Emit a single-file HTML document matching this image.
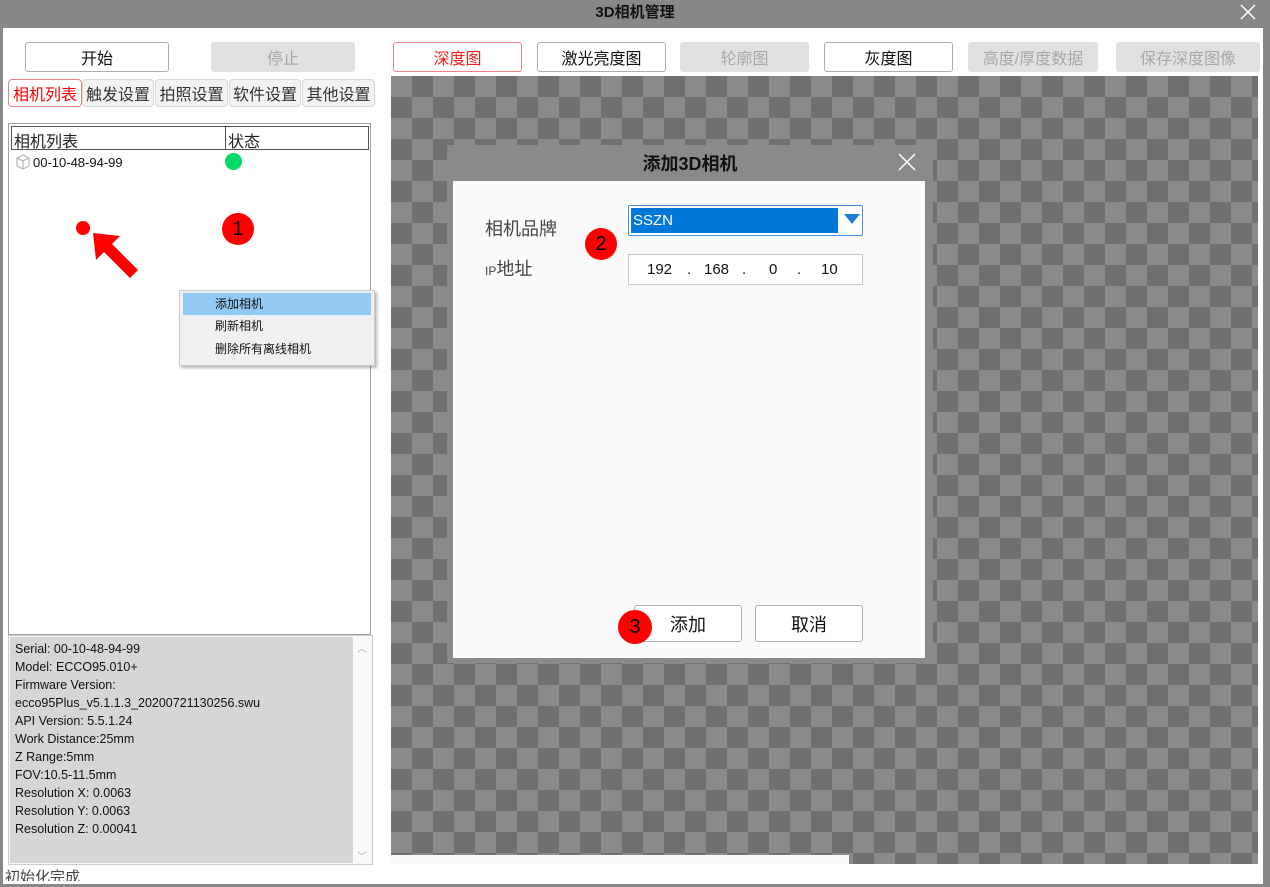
<!DOCTYPE html>
<html><head><meta charset="utf-8"><style>
*{box-sizing:border-box;margin:0;padding:0}
body{width:1270px;height:887px;overflow:hidden;background:#888;font-family:"Liberation Sans","Noto Sans CJK SC",sans-serif;position:relative}
.abs{position:absolute}
.btn{position:absolute;height:30px;border:1px solid #adadad;border-radius:3px;background:#fff;font-size:16px;display:flex;align-items:center;justify-content:center;color:#111}
.dis{background:#e1e1e1;border-color:#e1e1e1;color:#a8a8a8}
.red{border-color:#f08080;color:#f02020}
.tab{position:absolute;top:79px;height:28px;border:1px solid #d8d8d8;border-radius:4px;background:#f2f2f2;font-size:16px;display:flex;align-items:center;justify-content:center;color:#333}
.badge{position:absolute;width:32px;height:32px;border-radius:50%;background:#f00;color:#000;font-size:20px;display:flex;align-items:center;justify-content:center}
.info div{height:18px;line-height:18px}
</style></head><body>
<div class="abs" style="left:0;top:0;width:1270px;height:28px;background:#888;text-align:center;font-weight:bold;font-size:15px;line-height:26px;color:#111">3D相机管理</div>
<svg class="abs" style="left:1240px;top:4px" width="16" height="16"><path d="M1 1L15 15M15 1L1 15" stroke="#fff" stroke-width="1.5"/></svg>
<div class="abs" style="left:3px;top:28px;width:1260px;height:859px;background:#fff"></div>
<div class="abs" style="left:0;top:884px;width:1270px;height:3px;background:#888"></div>

<div class="btn" style="left:25px;top:42px;width:144px">开始</div>
<div class="btn dis" style="left:211px;top:42px;width:144px">停止</div>
<div class="btn red" style="left:393px;top:42px;width:129px">深度图</div>
<div class="btn" style="left:537px;top:42px;width:129px">激光亮度图</div>
<div class="btn dis" style="left:680px;top:42px;width:129px">轮廓图</div>
<div class="btn" style="left:824px;top:42px;width:129px">灰度图</div>
<div class="btn dis" style="left:968px;top:42px;width:130px">高度/厚度数据</div>
<div class="btn dis" style="left:1116px;top:42px;width:144px">保存深度图像</div>

<div class="tab" style="left:8px;width:74px;border-color:#f08080;color:#f00;background:#fff">相机列表</div>
<div class="tab" style="left:82px;width:72px">触发设置</div>
<div class="tab" style="left:155px;width:73px">拍照设置</div>
<div class="tab" style="left:229px;width:72px">软件设置</div>
<div class="tab" style="left:302px;width:73px">其他设置</div>

<div class="abs" style="left:8px;top:123px;width:363px;height:512px;border:1px solid #a0a0a0;background:#fff"></div>
<div class="abs" style="left:11px;top:126px;width:358px;height:24px;border:1px solid #555;font-size:16px;color:#222">
 <span class="abs" style="left:2px;top:1px">相机列表</span>
 <div class="abs" style="left:213px;top:0;width:1px;height:22px;background:#555"></div>
 <span class="abs" style="left:216px;top:1px">状态</span>
</div>
<svg class="abs" style="left:15px;top:154px" width="16" height="16"><path d="M8 1L14 4V12L8 15L2 12V4Z M2 4L8 7L14 4 M8 7V15" fill="none" stroke="#aaa"/></svg>
<div class="abs" style="left:33px;top:155px;font-size:13px;color:#111">00-10-48-94-99</div>
<div class="abs" style="left:225px;top:153px;width:17px;height:17px;border-radius:50%;background:#00dc64"></div>

<div class="abs" style="left:76px;top:221px;width:14px;height:14px;border-radius:50%;background:#f00"></div>
<svg class="abs" style="left:90px;top:230px" width="50" height="50"><path d="M3 3L30 6L22 14L48 40L40 48L14 22L6 30Z" fill="#f00"/></svg>
<div class="badge" style="left:222px;top:213px">1</div>

<div class="abs" style="left:179px;top:290px;width:196px;height:76px;background:#f0f0f0;border:1px solid #ccc;box-shadow:2px 2px 3px rgba(0,0,0,.3);font-size:12px;color:#111">
 <div style="margin:2px 3px 0;height:22px;background:#93c9f5;padding-left:32px;line-height:22px">添加相机</div>
 <div style="padding-left:35px;line-height:23px">刷新相机</div>
 <div style="padding-left:35px;line-height:22px">删除所有离线相机</div>
</div>

<div class="abs" style="left:8px;top:635px;width:365px;height:230px;background:#f8f8f8;border:1px solid #ccc"></div>
<div class="abs info" style="left:10px;top:637px;width:343px;height:226px;background:#d6d6d6;padding:3px 0 0 5px;font-size:12.5px;color:#111">
<div>Serial: 00-10-48-94-99</div><div>Model: ECCO95.010+</div><div>Firmware Version:</div><div>ecco95Plus_v5.1.1.3_20200721130256.swu</div><div>API Version: 5.5.1.24</div><div>Work Distance:25mm</div><div>Z Range:5mm</div><div>FOV:10.5-11.5mm</div><div>Resolution X: 0.0063</div><div>Resolution Y: 0.0063</div><div>Resolution Z: 0.00041</div>
</div>
<div class="abs" style="left:357px;top:640px;font-size:10px;color:#aaa">︿</div>
<div class="abs" style="left:357px;top:848px;font-size:10px;color:#aaa">﹀</div>
<div class="abs" style="left:5px;top:866px;font-size:15px;color:#444;height:15px;overflow:hidden">初始化完成</div>

<div class="abs" style="left:391px;top:76px;width:867px;height:788px;background-color:#8a8a8a;background-image:linear-gradient(45deg,#707070 25%,transparent 25%,transparent 75%,#707070 75%),linear-gradient(45deg,#707070 25%,transparent 25%,transparent 75%,#707070 75%);background-size:42px 42px;background-position:0 0,21px 21px"></div>
<div class="abs" style="left:391px;top:855px;width:458px;height:9px;background:#f8f8f8"></div>

<div class="abs" style="left:447px;top:145px;width:486px;height:518px;background:#8a8a8a"></div>
<div class="abs" style="left:447px;top:150px;width:486px;text-align:center;font-weight:bold;font-size:18px;color:#111">添加3D相机</div>
<svg class="abs" style="left:898px;top:153px" width="18" height="18"><path d="M1 1L17 17M17 1L1 17" stroke="#fff" stroke-width="1.5"/></svg>
<div class="abs" style="left:453px;top:181px;width:472px;height:477px;background:#fafafa"></div>
<div class="abs" style="left:485px;top:215px;font-size:18px;color:#444">相机品牌</div>
<div class="abs" style="left:485px;top:255px;font-size:18px;color:#444"><span style="font-size:12px">IP</span>地址</div>
<div class="abs" style="left:628px;top:205px;width:235px;height:31px;border:1px solid #4a90e2;border-radius:2px;background:#fff"></div>
<div class="abs" style="left:631px;top:208px;width:207px;height:25px;background:#0078d7;color:#fff;font-size:15px;line-height:25px;padding-left:2px">SSZN</div>
<svg class="abs" style="left:844px;top:214px" width="16" height="10"><path d="M0 0H16L8 10Z" fill="#1e7fd8"/></svg>
<div class="abs" style="left:628px;top:254px;width:235px;height:31px;border:1px solid #c8c8c8;background:#fff;font-size:15px;color:#111">
 <span class="abs" style="left:18px;top:6px">192</span><span class="abs" style="left:58px;top:6px">.</span><span class="abs" style="left:75px;top:6px">168</span><span class="abs" style="left:113px;top:6px">.</span><span class="abs" style="left:140px;top:6px">0</span><span class="abs" style="left:168px;top:6px">.</span><span class="abs" style="left:192px;top:6px">10</span>
</div>
<div class="badge" style="left:585px;top:228px">2</div>
<div class="btn" style="left:634px;top:605px;width:108px;height:37px;font-size:18px">添加</div>
<div class="btn" style="left:755px;top:605px;width:108px;height:37px;font-size:18px">取消</div>
<div class="badge" style="left:618px;top:610px;width:34px;height:34px">3</div>
</body></html>
